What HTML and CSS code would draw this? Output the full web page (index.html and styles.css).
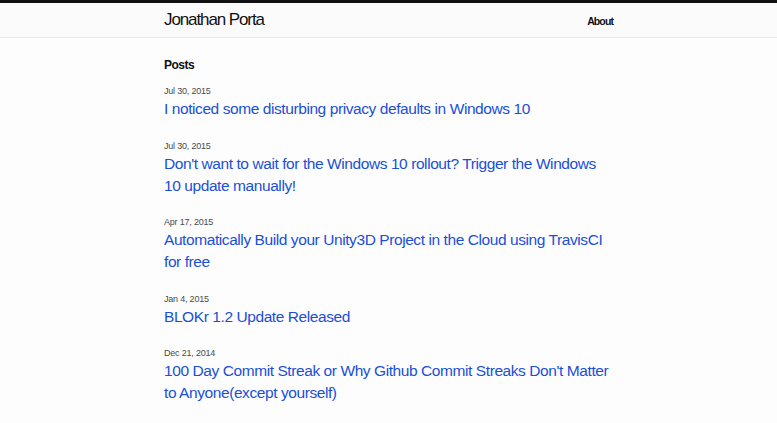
FILE: index.html
```html
<!DOCTYPE html>
<html lang="en">
<head>
    <meta charset="UTF-8">
    <meta name="viewport" content="width=device-width, initial-scale=1.0">
    <title>Jonathan Porta</title>
    <link rel="stylesheet" href="styles.css">
</head>
<body>
    <header class="site-header">
        <div class="wrapper header-inner">
            <a class="site-title" href="#">Jonathan Porta</a>
            <nav class="site-nav">
                <a class="page-link" href="#">About</a>
            </nav>
        </div>
    </header>

    <main class="page-content">
        <div class="wrapper">
            <h1 class="page-heading">Posts</h1>
            <ul class="post-list">
                <li>
                    <span class="post-meta">Jul 30, 2015</span>
                    <h2><a class="post-link" href="#">I noticed some disturbing privacy defaults in Windows 10</a></h2>
                </li>
                <li>
                    <span class="post-meta">Jul 30, 2015</span>
                    <h2><a class="post-link" href="#">Don't want to wait for the Windows 10 rollout? Trigger the Windows 10 update manually!</a></h2>
                </li>
                <li>
                    <span class="post-meta">Apr 17, 2015</span>
                    <h2><a class="post-link" href="#">Automatically Build your Unity3D Project in the Cloud using TravisCI for free</a></h2>
                </li>
                <li>
                    <span class="post-meta">Jan 4, 2015</span>
                    <h2><a class="post-link" href="#">BLOKr 1.2 Update Released</a></h2>
                </li>
                <li>
                    <span class="post-meta">Dec 21, 2014</span>
                    <h2><a class="post-link" href="#">100 Day Commit Streak or Why Github Commit Streaks Don't Matter to Anyone(except yourself)</a></h2>
                </li>
            </ul>
        </div>
    </main>
</body>
</html>
```

FILE: styles.css
```css
* {
    margin: 0;
    padding: 0;
    box-sizing: border-box;
}

body {
    font-family: "Liberation Sans", Arial, sans-serif;
    background: #fdfdfd;
    color: #111;
}

a {
    text-decoration: none;
}

.wrapper {
    max-width: 449px;
    margin: 0 auto;
}

.site-header {
    border-top: 3px solid #111;
    border-bottom: 1px solid #e8e8e8;
    background: #fbfbfb;
}

.header-inner {
    display: flex;
    justify-content: space-between;
    align-items: center;
    height: 34px;
}

.site-title {
    font-size: 17px;
    letter-spacing: -1.1px;
    color: #111;
}

.page-link {
    font-size: 10.5px;
    font-weight: bold;
    letter-spacing: -0.9px;
    color: #111;
}

.page-content {
    padding-top: 20px;
}

.page-heading {
    font-size: 12px;
    font-weight: bold;
    letter-spacing: -0.5px;
    margin-bottom: 13px;
}

.post-list {
    list-style: none;
}

.post-list li {
    margin-bottom: 19.5px;
}

.post-meta {
    display: block;
    font-size: 9px;
    color: #4a4a4a;
    letter-spacing: -0.2px;
    line-height: 13px;
}

.post-list h2 {
    font-size: 15.5px;
    font-weight: normal;
    line-height: 22px;
}

.post-link {
    color: #1a4fd8;
    letter-spacing: -0.42px;
}
```
